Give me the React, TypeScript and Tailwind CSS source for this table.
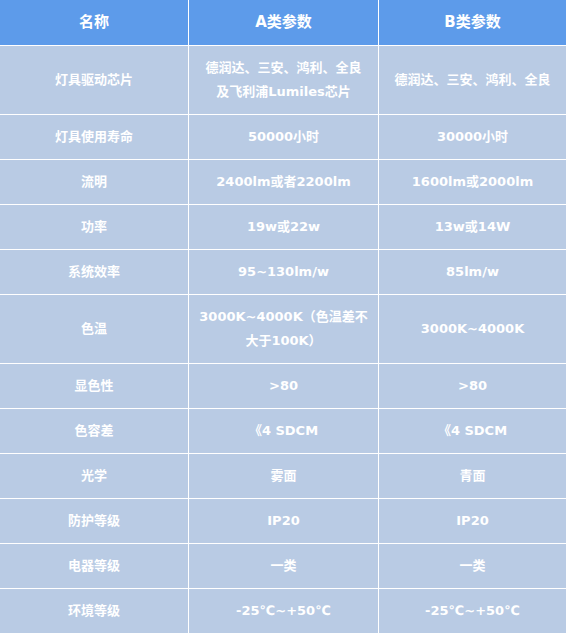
import React from "react";

const rows: { name: string; a: string[]; b: string[]; tall?: boolean }[] = [
  { name: "灯具驱动芯片", a: ["德润达、三安、鸿利、全良", "及飞利浦Lumiles芯片"], b: ["德润达、三安、鸿利、全良"], tall: true },
  { name: "灯具使用寿命", a: ["50000小时"], b: ["30000小时"] },
  { name: "流明", a: ["2400lm或者2200lm"], b: ["1600lm或2000lm"] },
  { name: "功率", a: ["19w或22w"], b: ["13w或14W"] },
  { name: "系统效率", a: ["95~130lm/w"], b: ["85lm/w"] },
  { name: "色温", a: ["3000K~4000K（色温差不", "大于100K）"], b: ["3000K~4000K"], tall: true },
  { name: "显色性", a: [">80"], b: [">80"] },
  { name: "色容差", a: ["《4 SDCM"], b: ["《4 SDCM"] },
  { name: "光学", a: ["雾面"], b: ["青面"] },
  { name: "防护等级", a: ["IP20"], b: ["IP20"] },
  { name: "电器等级", a: ["一类"], b: ["一类"] },
  { name: "环境等级", a: ["-25℃~+50℃"], b: ["-25℃~+50℃"] },
];

const font = { fontFamily: '"DejaVu Sans", "Noto Sans CJK SC", sans-serif' };

function Cell({ lines }: { lines: string[] }) {
  return (
    <div className="bg-[#b9cbe4] flex flex-col items-center justify-center text-center text-white text-[13px] font-bold leading-[24px]">
      {lines.map((l, i) => (
        <div key={i}>{l}</div>
      ))}
    </div>
  );
}

export default function App() {
  return (
    <div
      className="w-[566px] h-[633px] bg-white grid grid-cols-[188px_189px_187px] gap-px overflow-hidden"
      style={{
        ...font,
        gridTemplateRows: "45px " + rows.map((r) => (r.tall ? "68px" : "44px")).join(" "),
      }}
    >
      {["名称", "A类参数", "B类参数"].map((h) => (
        <div key={h} className="bg-[#5d9bea] flex items-center justify-center text-white text-[15px] font-bold">
          {h}
        </div>
      ))}
      {rows.map((r) => (
        <React.Fragment key={r.name}>
          <Cell lines={[r.name]} />
          <Cell lines={r.a} />
          <Cell lines={r.b} />
        </React.Fragment>
      ))}
    </div>
  );
}
